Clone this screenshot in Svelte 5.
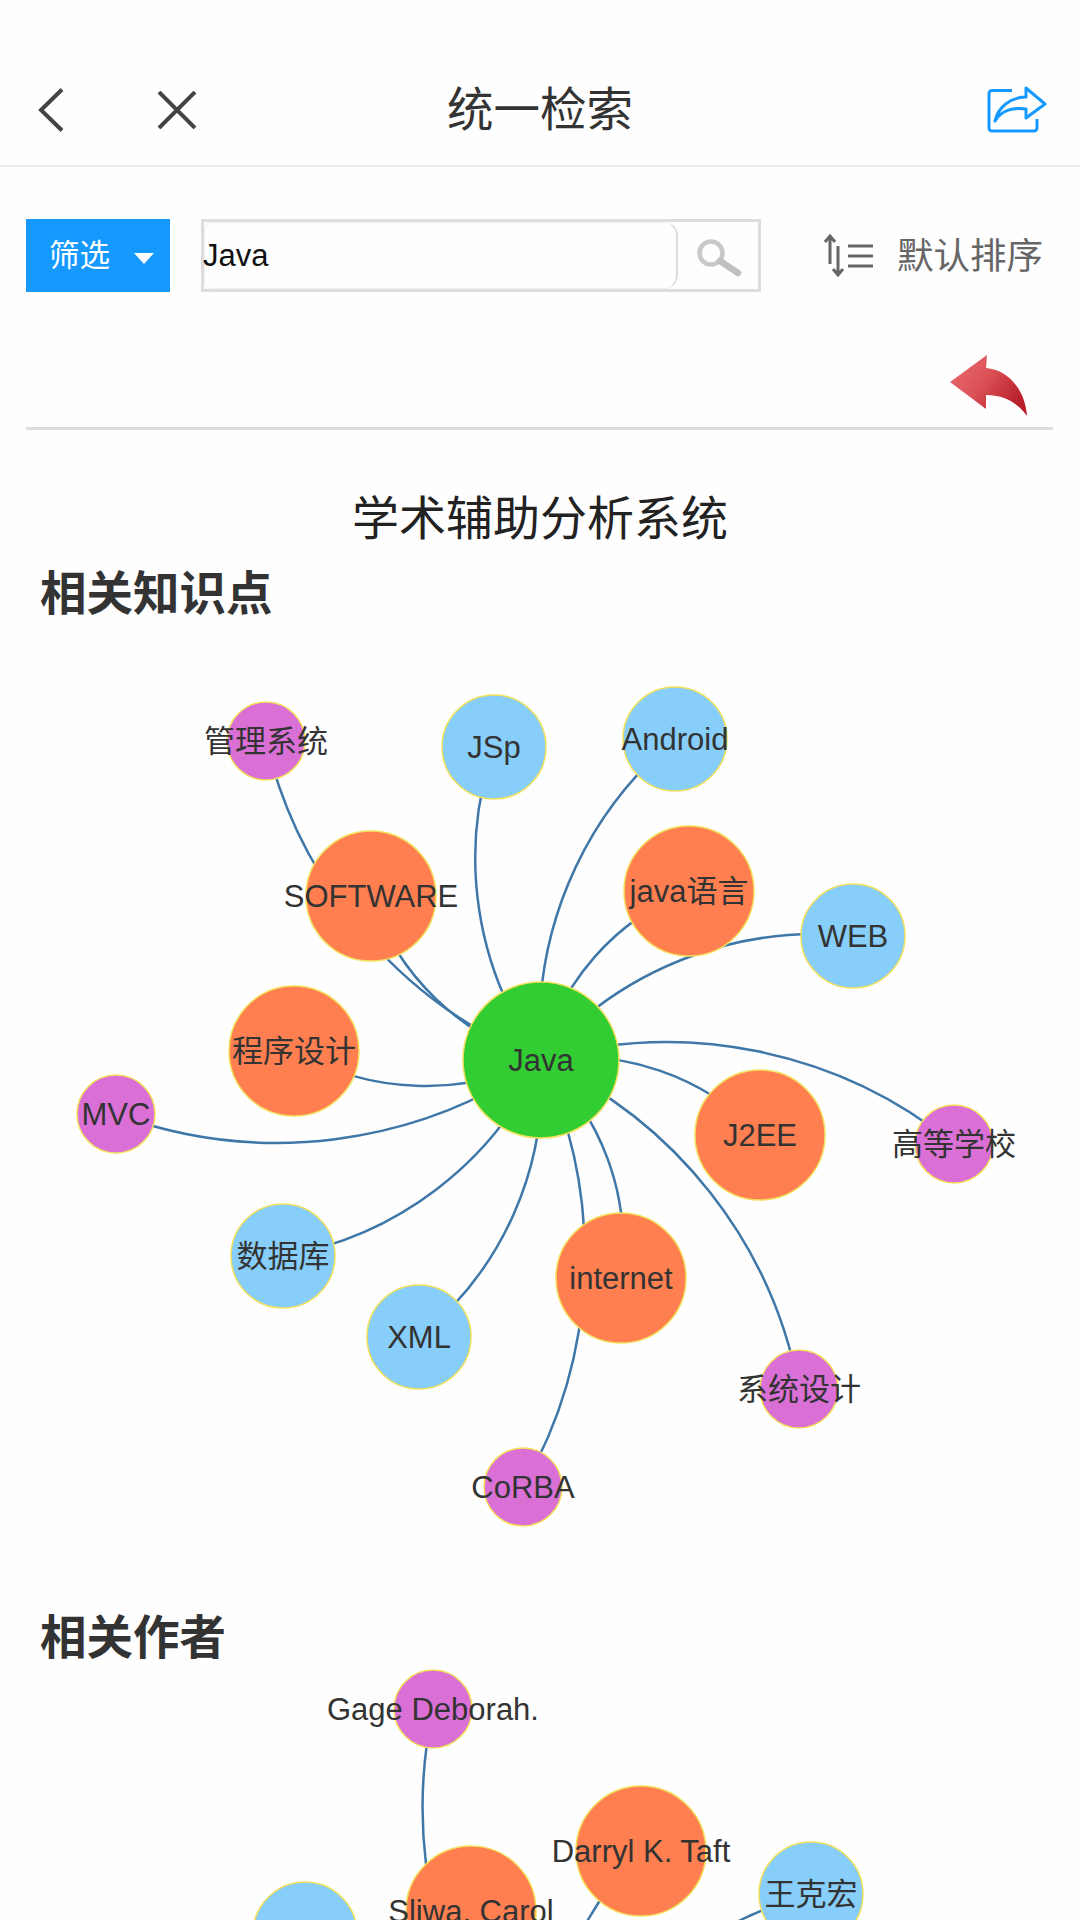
<script>
  const colors = {
    hub: "#32cd32",
    mid: "#ff7f50",
    leaf: "#87cefa",
    tip: "#da70d6",
  };
  const radius = { hub: 78, mid: 65, leaf: 52, tip: 39 };

  // coordinates are page coordinates, each svg shifts its viewBox to match
  const topicHub = { name: "Java", x: 541, y: 1060, kind: "hub" };
  const topics = [
    { name: "管理系统", x: 266, y: 741, kind: "tip" },
    { name: "JSp", x: 494, y: 747, kind: "leaf" },
    { name: "Android", x: 675, y: 739, kind: "leaf" },
    { name: "SOFTWARE", x: 371, y: 896, kind: "mid" },
    { name: "java语言", x: 689, y: 891, kind: "mid" },
    { name: "WEB", x: 853, y: 936, kind: "leaf" },
    { name: "程序设计", x: 294, y: 1051, kind: "mid" },
    { name: "MVC", x: 116, y: 1114, kind: "tip" },
    { name: "J2EE", x: 760, y: 1135, kind: "mid" },
    { name: "高等学校", x: 954, y: 1144, kind: "tip" },
    { name: "数据库", x: 283, y: 1256, kind: "leaf" },
    { name: "XML", x: 419, y: 1337, kind: "leaf" },
    { name: "internet", x: 621, y: 1278, kind: "mid" },
    { name: "系统设计", x: 799, y: 1389, kind: "tip" },
    { name: "CoRBA", x: 523, y: 1487, kind: "tip" },
  ];

  const authorHub = { name: "", x: 551, y: 2131, kind: "hub" };
  const authors = [
    { name: "Gage Deborah.", x: 433, y: 1709, kind: "tip" },
    { name: "Sliwa, Carol", x: 471, y: 1911, kind: "mid" },
    { name: "Darryl K. Taft", x: 641, y: 1851, kind: "mid" },
    { name: "王克宏", x: 811, y: 1894, kind: "leaf" },
    { name: "", x: 305, y: 1934, kind: "leaf" },
  ];

  function arc(a, b) {
    const dr = Math.hypot(b.x - a.x, b.y - a.y) * 1.08;
    return `M${a.x},${a.y}A${dr},${dr} 0 0,1 ${b.x},${b.y}`;
  }
</script>

{#snippet graph(hub, nodes, top, height)}
  <svg class="graph" width="1080" {height} viewBox="0 {top} 1080 {height}">
    {#each nodes as n}
      <path class="link" d={arc(hub, n)} />
    {/each}
    {#each [...nodes, hub] as n}
      <circle class="node" cx={n.x} cy={n.y} r={radius[n.kind]} fill={colors[n.kind]} />
    {/each}
    {#each [...nodes, hub] as n}
      <text class="label" x={n.x} y={n.y + 11}>{n.name}</text>
    {/each}
  </svg>
{/snippet}

<div class="page">
  <header class="nav">
    <div class="nav-left">
      <svg width="26" height="44" viewBox="0 0 26 44">
        <path d="M24 1.5 L3 22 L24 42.5" class="line" />
      </svg>
      <svg width="40" height="38" viewBox="0 0 40 38">
        <path d="M2 1 L38 37 M38 1 L2 37" class="line" />
      </svg>
    </div>
    <div class="nav-title">统一检索</div>
    <div class="nav-right">
      <svg width="60" height="48" viewBox="0 0 60 48">
        <path
          class="share"
          d="M25 4.5H5a3 3 0 0 0-3 3V42a3 3 0 0 0 3 3H47a3 3 0 0 0 3-3V33"
        />
        <path
          class="share"
          d="M39 2L58 18L39 32V23C27 21 14 24 8 35C11 21 24 11 39 11Z"
        />
      </svg>
    </div>
  </header>

  <div class="toolbar">
    <button class="filter">
      <span>筛选</span>
      <i class="caret"></i>
    </button>
    <div class="search">
      <div class="search-input">Java</div>
      <div class="search-btn">
        <svg width="46" height="40" viewBox="0 0 46 40">
          <circle cx="15" cy="15" r="11.5" fill="none" stroke="#c8c8c8" stroke-width="4.5" />
          <path d="M24 23L42 35" stroke="#c0c0c0" stroke-width="6.5" stroke-linecap="round" />
        </svg>
      </div>
    </div>
    <div class="sort">
      <svg width="52" height="44" viewBox="0 0 52 44">
        <path
          class="sort-line"
          d="M8 30V2M3 8L8 2L13 8M16 12V41M11 35L16 41L21 35M26 12H51M26 22H51M26 32H51"
        />
      </svg>
      <span>默认排序</span>
    </div>
  </div>

  <div class="back-row">
    <svg width="80" height="64" viewBox="0 0 80 64">
      <defs>
        <linearGradient id="redArrow" x1="0" y1="0" x2="1" y2="0.6">
          <stop offset="0" stop-color="#ea6d74" />
          <stop offset="0.5" stop-color="#dc5257" />
          <stop offset="1" stop-color="#b81f28" />
        </linearGradient>
      </defs>
      <path
        fill="url(#redArrow)"
        d="M1 28L38 1L37 14C60 16 76 36 78 62C68 48 54 41 37 41L37 55Z"
      />
    </svg>
  </div>

  <div class="rule"></div>

  <h1 class="main-title">学术辅助分析系统</h1>
  <h2 class="section first">相关知识点</h2>
  {@render graph(topicHub, topics, 640, 970)}
  <h2 class="section second">相关作者</h2>
  {@render graph(authorHub, authors, 1668, 252)}
</div>

<style>
  :global(body) {
    background: #fefefe;
  }

  .page {
    width: 1080px;
    height: 1920px;
    overflow: hidden;
    font-family: "Liberation Sans", "Noto Sans CJK SC", sans-serif;
    color: #333;
  }

  .nav {
    height: 110px;
    padding-top: 55px;
    display: grid;
    grid-template-columns: 1fr auto 1fr;
    align-items: center;
    border-bottom: 2px solid #eee;
  }

  .nav-left {
    display: flex;
    align-items: center;
    gap: 93px;
    padding-left: 38px;
  }

  .nav-right {
    display: flex;
    justify-content: flex-end;
    padding-right: 33px;
  }

  .nav-title {
    font-size: 46.5px;
    line-height: 1;
  }

  .line {
    fill: none;
    stroke: #444;
    stroke-width: 4;
  }

  .share {
    fill: none;
    stroke: #1599ff;
    stroke-width: 3;
    stroke-linejoin: round;
  }

  .toolbar {
    display: flex;
    align-items: stretch;
    height: 73px;
    margin-top: 52px;
    padding-left: 26px;
  }

  .filter {
    width: 144px;
    display: flex;
    align-items: center;
    gap: 24px;
    padding: 0 0 5px 23px;
    border: none;
    background: #1599ff;
    color: #fff;
    font: inherit;
    font-size: 30.5px;
  }

  .caret {
    width: 0;
    height: 0;
    margin-top: 11px;
    border-left: 10px solid transparent;
    border-right: 10px solid transparent;
    border-top: 11px solid #fff;
  }

  .search {
    width: 560px;
    box-sizing: border-box;
    margin-left: 31px;
    display: flex;
    border: 3px solid #ddd;
  }

  .search-input {
    width: 474px;
    display: flex;
    align-items: center;
    box-sizing: border-box;
    border: 1px solid #f0f0f0;
    border-right: 2px solid #ddd;
    border-radius: 8px 14px 14px 8px;
    color: #111;
    font-size: 31px;
    text-indent: -2px;
  }

  .search-btn {
    flex: 1;
    display: flex;
    align-items: center;
    justify-content: center;
    padding-top: 4px;
    padding-left: 2px;
  }

  .sort {
    display: flex;
    align-items: center;
    gap: 23px;
    margin-left: 61px;
    color: #666;
    font-size: 36.5px;
  }

  .sort span {
    padding-bottom: 5px;
  }

  .sort-line {
    fill: none;
    stroke: #666;
    stroke-width: 3;
  }

  .back-row {
    display: flex;
    justify-content: flex-end;
    height: 73px;
    padding-top: 62px;
    padding-right: 51px;
    box-sizing: content-box;
  }

  .rule {
    height: 3px;
    margin: 0 27px 0 26px;
    background: #ddd;
  }

  .main-title {
    margin: 61px 0 0;
    font-size: 47px;
    font-weight: 400;
    line-height: 56px;
    text-align: center;
    color: #222;
  }

  .section {
    margin: 0;
    padding-left: 40px;
    font-size: 46.5px;
    font-weight: 700;
    line-height: 56px;
    color: #333;
  }

  .section.first {
    margin-top: 19px;
    margin-bottom: 18px;
  }

  .section.second {
    margin-bottom: 2px;
  }

  .graph {
    display: block;
  }

  .link {
    fill: none;
    stroke: #3f77a8;
    stroke-width: 2.5;
  }

  .node {
    stroke: #f2e05a;
    stroke-width: 1.5;
  }

  .label {
    font-size: 31px;
    fill: #333;
    text-anchor: middle;
  }
</style>
